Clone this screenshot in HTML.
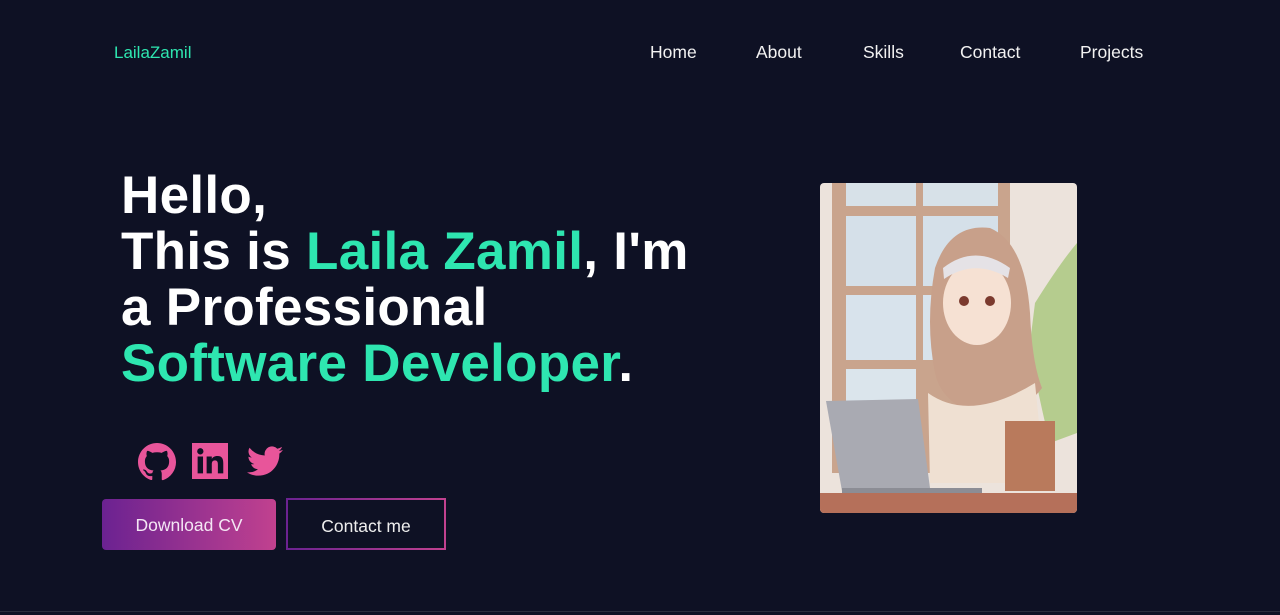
<!DOCTYPE html>
<html><head><meta charset="utf-8"><style>
*{margin:0;padding:0;box-sizing:border-box}
body{width:1280px;height:615px;background:#0e1124;font-family:"Liberation Sans",sans-serif;position:relative;overflow:hidden;color:#fff}
.logo{position:absolute;left:114px;top:43px;font-size:17px;color:#2ee6b0}
.nav a{position:absolute;top:42px;font-size:17.5px;color:#f2f2f2;text-decoration:none}
h1{position:absolute;left:121px;top:168px;font-size:53px;line-height:56px;font-weight:bold;letter-spacing:0.3px}
.g{color:#2ee6b0}
.soc{position:absolute;top:443px}
.btn1{position:absolute;left:102px;top:499px;width:174px;height:51px;border-radius:4px;background:linear-gradient(90deg,#6b2291,#c1418f);font-size:17.5px;text-align:center;line-height:53px;color:#f4e6f4}
.btn2{position:absolute;left:286px;top:498px;width:160px;height:52px;border:2px solid;border-image:linear-gradient(90deg,#6b2291,#c1418f) 1;font-size:17.5px;text-align:center;line-height:52px;color:#eee}
.img{position:absolute;left:820px;top:183px;width:257px;height:330px;border-radius:4px;overflow:hidden}
.bottom{position:absolute;left:0;top:611px;width:1280px;height:1px;background:#2a2d3c}
</style></head><body>
<div class="logo">LailaZamil</div>
<div class="nav"><a style="left:650px">Home</a><a style="left:756px">About</a><a style="left:863px">Skills</a><a style="left:960px">Contact</a><a style="left:1080px">Projects</a></div>
<h1>Hello,<br>This is <span class="g">Laila Zamil</span>, I'm<br>a Professional<br><span class="g">Software Developer</span>.</h1>
<svg class="soc" style="left:138px" width="38" height="38" viewBox="0 0 16 16"><path fill="#e8559a" d="M8 0C3.58 0 0 3.580 0 8c0 3.54 2.29 6.53 5.47 7.59.4.07.55-.17.55-.38v-1.330c-2.23.48-2.7-1.07-2.7-1.07-.36-.92-.89-1.17-.89-1.17-.73-.5.06-.49.06-.49.8.06 1.23.83 1.23.83.71 1.22 1.870.87 2.33.66.07-.52.28-.87.51-1.07-1.78-.2-3.650-.89-3.65-3.95 0-.87.31-1.59.82-2.15-.08-.2-.36-1.02.08-2.12 0 0 .67-.21 2.2.82a7.6 7.6 0 014 0c1.53-1.04 2.2-.82 2.2-.82.44 1.1.16 1.92.08 2.12.51.56.82 1.27.82 2.15 0 3.07-1.87 3.75-3.65 3.95.29.25.54.73.54 1.48v2.2c0 .21.15.46.55.38A8.01 8.01 0 0016 8c0-4.42-3.58-8-8-8z"/></svg>
<svg class="soc" style="left:192px" width="36" height="36" viewBox="0 0 16 16"><rect width="16" height="16" fill="#e8559a"/><rect x="2.5" y="6" width="2.4" height="7.5" fill="#0e1124"/><circle cx="3.7" cy="3.7" r="1.4" fill="#0e1124"/><path fill="#0e1124" d="M6.5 6h2.3v1.1c.4-.7 1.2-1.3 2.5-1.3 2.2 0 2.6 1.4 2.6 3.3v4.4h-2.4V9.6c0-.9-.1-1.9-1.300-1.9s-1.4.9-1.4 1.900v3.9H6.5z"/></svg>
<svg class="soc" style="left:247px" width="36" height="36" viewBox="0 0 16 16"><path fill="#e8559a" d="M5.03 14.5c6.04 0 9.34-5 9.34-9.34v-.42A6.7 6.7 0 0016 3.04a6.5 6.5 0 01-1.89.52 3.3 3.3 0 001.45-1.82 6.6 6.6 0 01-2.08.8A3.28 3.28 0 007.9 5.53 9.3 9.3 0 011.11 2.1a3.28 3.28 0 001.02 4.38A3.3 3.3 0 01.64 6.07v.04a3.28 3.28 0 002.63 3.22 3.3 3.3 0 01-1.48.06 3.29 3.29 0 003.07 2.28A6.6 6.6 0 010 13.03a9.3 9.3 0 005.03 1.47"/></svg>
<div class="btn1">Download CV</div>
<div class="btn2">Contact me</div>
<svg class="img" viewBox="0 0 257 330">
<rect width="257" height="330" fill="#ece3dc"/>
<rect x="12" y="0" width="178" height="290" fill="#c9a48d"/>
<rect x="26" y="0" width="70" height="23" fill="#d7e1e8"/><rect x="103" y="0" width="75" height="23" fill="#d7e1e8"/>
<rect x="26" y="33" width="70" height="70" fill="#d5e0e9"/><rect x="103" y="33" width="75" height="70" fill="#d5e0e9"/>
<rect x="26" y="112" width="70" height="65" fill="#d8e3ec"/><rect x="103" y="112" width="75" height="65" fill="#d8e3ec"/>
<rect x="26" y="186" width="70" height="40" fill="#dbe5ec"/>
<path d="M215 120 Q240 80 257 60 L257 250 L230 260 Q215 200 210 160Z" fill="#a7c67a" opacity=".8"/>
<path d="M115 85 Q130 40 170 45 Q205 60 210 130 Q212 180 222 205 Q200 235 150 230 Q120 215 115 190 Q105 140 115 85Z" fill="#c8a08a"/>
<ellipse cx="157" cy="120" rx="34" ry="42" fill="#f6e1d3"/>
<path d="M123 85 Q155 60 190 85 L188 95 Q155 75 124 96Z" fill="#e5e2e6"/>
<circle cx="144" cy="118" r="5" fill="#7b3a2e"/><circle cx="170" cy="118" r="5" fill="#7b3a2e"/>
<path d="M108 210 Q150 240 215 200 L225 300 L110 300Z" fill="#efe0d2"/>
<rect x="185" y="238" width="50" height="70" fill="#b97a5c"/>
<path d="M6 218 L98 216 L110 305 L22 308Z" fill="#a9aab2"/>
<rect x="22" y="305" width="140" height="6" fill="#8c8d95"/>
<rect x="0" y="310" width="257" height="20" fill="#b5705a"/>
</svg>
<div class="bottom"></div>
</body></html>
